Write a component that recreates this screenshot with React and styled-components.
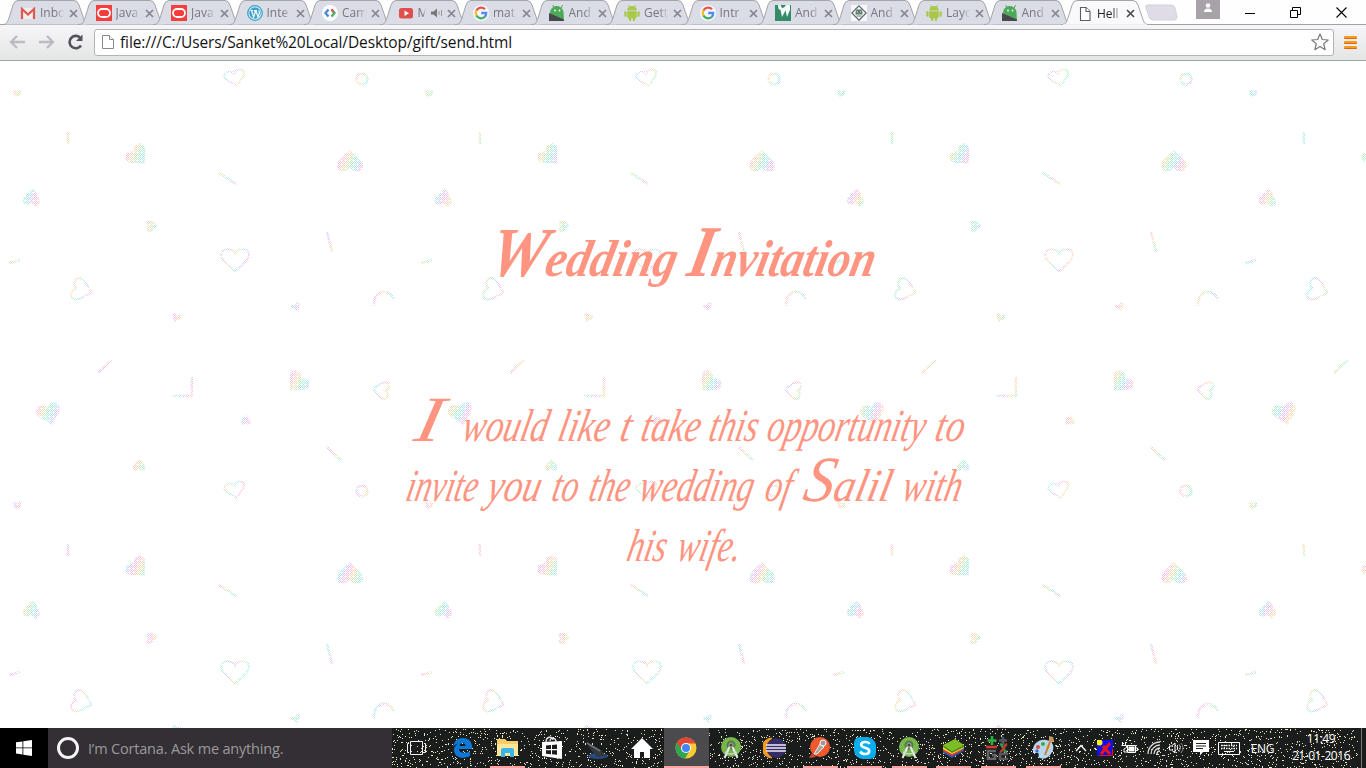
import React, { useLayoutEffect, useRef, useState } from 'react';
import styled, { createGlobalStyle } from 'styled-components';

const GlobalStyle = createGlobalStyle`
  * { box-sizing: border-box; }
  html, body { margin: 0; padding: 0; overflow: hidden; background: #fff; }
  svg { display: block; flex: none; }
`;

const Screen = styled.div`
  width: 1366px;
  height: 768px;
  display: flex;
  flex-direction: column;
  overflow: hidden;
  font-family: 'Open Sans', 'Noto Sans', sans-serif;
`;

/* ---------- browser frame ---------- */

const TabStrip = styled.div`
  height: 25px;
  flex: none;
  display: flex;
  background: #fefefe;
  border-bottom: 1px solid #a2a2a4;
  padding-left: 6px;
`;

const TabBox = styled.div`
  position: relative;
  width: ${(p) => (p.$active ? 80.4 : 75.5)}px;
  height: ${(p) => (p.$active ? 25 : 24)}px;
  flex: none;
  display: flex;
  align-items: center;
  padding: 2px 0 0 14px;
  z-index: ${(p) => (p.$active ? 2 : 1)};
`;

const TabShape = styled.svg`
  position: absolute;
  left: ${(p) => (p.$active ? 2 : 0)}px;
  top: 0;
  overflow: visible;
`;

const Favicon = styled.div`
  position: relative;
  width: 16px;
  height: 16px;
  flex: none;
  opacity: ${(p) => (p.$active ? 1 : 0.9)};
`;

const TabTitle = styled.div`
  position: relative;
  margin-left: 4px;
  width: ${(p) => (p.$short ? 8 : 24)}px;
  white-space: nowrap;
  font-size: 12px;
  line-height: 18px;
  color: ${(p) => (p.$active ? '#222' : '#77777c')};
  mask-image: linear-gradient(90deg, #000 65%, transparent);
`;

const CloseMark = styled.svg`
  position: relative;
  margin-left: 5px;
`;

const NewTab = styled.svg`
  margin: 4px 0 0 1px;
`;

const WindowButtons = styled.div`
  margin-left: auto;
  margin-right: 2px;
  display: flex;
  height: 24px;
`;

const Person = styled.div`
  width: 24px;
  height: 19px;
  margin-right: 8px;
  background: #a6a2a8;
  display: flex;
  justify-content: center;
`;

const WinButton = styled.div`
  width: 45.5px;
  height: 25px;
  display: flex;
  align-items: center;
  justify-content: center;
`;

const Toolbar = styled.div`
  height: 36px;
  flex: none;
  display: flex;
  align-items: center;
  padding: 0 8px 1px 9px;
  background: linear-gradient(#f6f5f7, #e4e6e6);
  border-bottom: 1px solid #9aa59e;
`;

const NavIcons = styled.div`
  display: flex;
  gap: 12px;
  width: 85px;
`;

const Omnibox = styled.div`
  flex: none;
  width: 1240px;
  height: 27px;
  display: flex;
  align-items: center;
  padding: 0 4px 0 7px;
  background: #fff;
  border: 1px solid #b2b4b4;
  border-radius: 3px;
`;

const Url = styled.div`
  flex: 1;
  margin-left: 4px;
  font-size: 15.5px;
  letter-spacing: -0.12px;
  line-height: 22px;
  color: #141414;
`;

const MenuBars = styled.div`
  margin-left: 10px;
  width: 13px;
  display: flex;
  flex-direction: column;
  gap: 2px;
`;

const MenuBar = styled.div`
  height: 3px;
  background: #f59a1c;
  border-bottom: 1px solid #e2680c;
  border-radius: 1px;
`;

/* ---------- invitation page ---------- */

const Page = styled.main`
  position: relative;
  height: 667px;
  flex: none;
  overflow: hidden;
  background: #fff;
  color: #ff9480;
  font-family: 'Liberation Serif', serif;
  font-style: italic;
`;

const Confetti = styled.svg`
  position: absolute;
  inset: 0;
`;

const Heading = styled.h1`
  position: relative;
  margin: 0;
  padding: 160px 0 0 488px;
  display: flex;
  gap: 11px;
  height: 241px;
  font-size: 52px;
  font-weight: 700;
  line-height: 76px;
`;

const Message = styled.div`
  position: relative;
  padding-top: 94px;
  font-size: 46px;
  line-height: 60px;
`;

const Line = styled.div`
  display: flex;
  height: 60px;
  padding-left: ${(p) => p.$start}px;
`;

const WordBox = styled.span`
  flex: none;
  width: ${(p) => p.$w}px;
  margin-right: ${(p) => p.$gap || 0}px;
  white-space: nowrap;
`;

const WordInk = styled.span`
  display: inline-block;
  transform-origin: 0 62%;
`;

const Initial = styled.span`
  font-size: ${(p) => p.$size}em;
  line-height: 0;
`;

/* Squeezes a word to the width that the layout gives it and slants it like handwriting. */
function Word({ w, gap, children }) {
  const ref = useRef(null);
  const [scale, setScale] = useState(1);
  useLayoutEffect(() => {
    setScale(w / ref.current.offsetWidth);
  }, [w]);
  return (
    <WordBox $w={w} $gap={gap}>
      <WordInk ref={ref} style={{ transform: `skewX(-12deg) scaleX(${scale})` }}>{children}</WordInk>
    </WordBox>
  );
}

/* ---------- taskbar ---------- */

const Taskbar = styled.footer`
  position: relative;
  height: 40px;
  flex: none;
  display: flex;
  background: #1b1d1c;
  color: #fff;
`;

const Specks = styled.svg`
  position: absolute;
  left: 392px;
  top: 0;
`;

const Start = styled.div`
  width: 48px;
  flex: none;
  background: #000;
  display: flex;
  align-items: center;
  justify-content: center;
`;

const Search = styled.div`
  width: 344px;
  flex: none;
  display: flex;
  align-items: center;
  padding-left: 9px;
  gap: 9px;
  background: #332f34;
  color: #9b9a9c;
  font-size: 14.5px;
  letter-spacing: -0.18px;
`;

const Ring = styled.div`
  width: 22px;
  height: 22px;
  border: 3px solid #f4f4f4;
  border-radius: 50%;
`;

const Apps = styled.div`
  position: relative;
  display: flex;
  flex: none;
  width: 674px;
`;

const AppCell = styled.div`
  width: ${(p) => (p.$wide ? 49 : 44.6)}px;
  flex: none;
  display: flex;
  align-items: center;
  justify-content: center;
  background: ${(p) => (p.$active ? '#4b4b4d' : 'transparent')};
  box-shadow: ${(p) => (p.$active ? 'inset 0 -2px #ffa3a3' : 'none')};
  ${(p) =>
    p.$open &&
    'background: linear-gradient(#ffa3a3, #ffa3a3) center bottom / 35px 2px no-repeat;'}
`;

const Tray = styled.div`
  position: relative;
  flex: 1;
  display: flex;
  align-items: center;
  padding-left: 3px;
`;

const TrayItem = styled.div`
  width: ${(p) => p.$w}px;
  flex: none;
  display: flex;
  justify-content: center;
  font-size: 12px;
  letter-spacing: -0.3px;
`;

const Clock = styled.div`
  width: 76px;
  flex: none;
  margin-top: -2px;
  text-align: center;
  font-size: 12px;
  line-height: 17px;
  letter-spacing: -0.45px;
`;

const Edge = styled.div`
  width: 1px;
  height: 40px;
  margin-left: auto;
  margin-right: 4px;
  background: #77777a;
`;

/* ---------- favicons ---------- */

const icons = {
  gmail: (
    <svg width="16" height="16"><rect x="1" y="3" width="14" height="11" fill="#f3eef0" /><path d="M2 14V4l6 5.500L14 4v10" fill="none" stroke="#dd4b3e" strokeWidth="2.200" /></svg>
  ),
  oracle: (
    <svg width="16" height="16"><rect width="16" height="16" fill="#fa2d2a" /><rect x="2" y="4" width="12" height="8" rx="4" fill="none" stroke="#fff" strokeWidth="1.800" /></svg>
  ),
  wordpress: (
    <svg width="16" height="16"><circle cx="8" cy="8" r="7.300" fill="#e9f4fa" stroke="#2b9cc8" strokeWidth="1.300" /><circle cx="8" cy="8" r="5.800" fill="#2b9cc8" /><path d="M3.500 5.500h2.500M7 5.500h3M4.500 5.500l2.200 6.500L8.200 7.500 7.700 5.500M8.800 5.500l2.200 6.500 1.500-4.500-.8-2" fill="none" stroke="#fff" strokeWidth="1.200" /></svg>
  ),
  brackets: (
    <svg width="16" height="16"><circle cx="8" cy="8" r="8" fill="#fff" /><path d="M6.500 4.500L3.500 8l3 3.500" fill="none" stroke="#3b7fd9" strokeWidth="2.300" /><path d="M9.500 4.500L12.500 8l-3 3.500" fill="none" stroke="#3aa757" strokeWidth="2.300" /><path d="M9.500 4.500l2 2.300" fill="none" stroke="#e8453c" strokeWidth="2.300" /></svg>
  ),
  youtube: (
    <svg width="16" height="16"><rect x="1" y="3" width="14" height="10.500" rx="2.500" fill="#e2403c" /><path d="M6.500 5.500v5.500L11 8.200z" fill="#fff" /></svg>
  ),
  google: (
    <svg width="16" height="16"><circle cx="8" cy="8" r="8" fill="#fafafd" /><g fill="none" strokeWidth="2.300"><path d="M12 4.200A5.300 5.300 0 0 0 3.400 5.500" stroke="#ea4335" /><path d="M3.400 5.500a5.300 5.300 0 0 0 0 5" stroke="#fbbc05" /><path d="M3.400 10.500a5.300 5.300 0 0 0 8.400 1.300" stroke="#34a853" /><path d="M11.600 12A5 5 0 0 0 13.200 8H8.200" stroke="#4285f4" /></g></svg>
  ),
  hive: (
    <svg width="16" height="16"><path d="M1 9A6.800 7 0 0 1 14.500 7l.5 9z" fill="#3fa549" /><path d="M3.500 0l2 3M13.500 0l-1.500 3.500" stroke="#3fa549" /><circle cx="6" cy="5.500" r=".9" fill="#fff" /><circle cx="10.500" cy="5.500" r=".9" fill="#fff" /><path d="M0 8L15 14.500V16H0z" fill="#36393b" /></svg>
  ),
  android: (
    <svg width="16" height="16" fill="#a4c63a"><path d="M3.200 5.500a4.800 4.500 0 0 1 9.600 0z" /><path d="M4.500 0l1.500 2.500M11.500 0L10 2.500" stroke="#a4c63a" /><rect x="3.200" y="6.200" width="9.600" height="7" rx="1" /><rect x=".3" y="6.200" width="2.200" height="5.500" rx="1" /><rect x="13.500" y="6.200" width="2.200" height="5.500" rx="1" /><rect x="5" y="12" width="2.200" height="4" rx="1" /><rect x="8.800" y="12" width="2.200" height="4" rx="1" /></svg>
  ),
  green: (
    <svg width="16" height="16"><rect width="16" height="16" fill="#23835a" /><path d="M3 0l.5 4 2 1L7 12l3.500-6.500L12 12l3-7V0h-4l-2 2.500L7 3 5.500 0z" fill="#f7fcf9" /></svg>
  ),
  diamond: (
    <svg width="16" height="16"><rect width="16" height="16" fill="#fafafa" /><path d="M8 .8L15.200 8 8 15.200 .8 8z" fill="none" stroke="#54585a" strokeWidth="1.200" /><path d="M4.500 7.500a3.500 3 0 0 1 7 0v2h-7z" fill="#4f7464" /><path d="M5.500 11h5M5 3.500l1.500 1.500M11 3.500L9.500 5" stroke="#4f7464" /><path d="M6 7h1M9 7h1" stroke="#fff" /></svg>
  ),
  page: (
    <svg width="16" height="16" fill="#fff" stroke="#5c5c60" strokeWidth="1.100"><path d="M3.500 1.500h5.500l4 4v9H3.500z" /><path d="M9 1.500v4h4" /></svg>
  ),
};

const tabs = [
  ['gmail', 'Inbo'], ['oracle', 'Java'], ['oracle', 'Java'], ['wordpress', 'Inte'],
  ['brackets', 'Cam'], ['youtube', 'M'], ['google', 'mat'], ['hive', 'And'],
  ['android', 'Gett'], ['google', 'Intr'], ['green', 'And'], ['diamond', 'And'],
  ['android', 'Layo'], ['hive', 'And'], ['page', 'Hell'],
];

function Tab({ icon, title, active }) {
  const short = icon === 'youtube';
  return (
    <TabBox $active={active}>
      <TabShape $active={active} width="88" height="25">
        <path
          d="M-4 24.500C1 24.500 1 23 3 18L7 5Q8.500 .5 12 .5H68Q71.500 .5 73 5L77.500 18C79 23 80 24.500 84 24.500"
          fill={active ? '#f9f8fa' : '#dadce6'}
          stroke="#a5a5a9"
        />
        {active && <path d="M-2 25h84" stroke="#f7f6f8" strokeWidth="1.500" />}
      </TabShape>
      <Favicon $active={active}>{icons[icon]}</Favicon>
      <TabTitle $active={active} $short={short}>{title}</TabTitle>
      {short && (
        <CloseMark width="11" height="12"><path d="M0 4.500h2.500L6 1.500v9L2.500 7.500H0z" fill="#77777b" /><path d="M8 4v4M10.500 3v6" stroke="#99999d" /></CloseMark>
      )}
      <CloseMark width="9" height="9" viewBox="0 0 9 9">
        <path d="M1 1l7 7M8 1L1 8" stroke={active ? '#4c4c50' : '#85858a'} strokeWidth="1.700" />
      </CloseMark>
    </TabBox>
  );
}

/* ---------- confetti pattern ---------- */

const HEART = 'M0 .5C-.25 .2-.5 0-.5-.22-.5-.52-.12-.56 0-.28 .12-.56 .5-.52 .5-.22 .5 0 .25 .2 0 .5Z';

const hearts = [
  [235, 17, 20, 16, -12, 0], [17, 33, 9, 8, 0, 1], [138, 95, 23, 20, -42, 1],
  [350, 100, 26, 22, 180, 1], [32, 136, 17, 18, 190, 1], [152, 165, 12, 11, -90, 1],
  [235, 199, 28, 23, 0, 0], [82, 229, 22, 20, -75, 0], [176, 257, 9, 9, 20, 1],
  [296, 246, 9, 8, -20, 1], [297, 322, 23, 20, 43, 1], [381, 329, 17, 16, 100, 0],
  [49, 353, 24, 22, -14, 1], [246, 359, 10, 10, 180, 1], [139, 404, 13, 12, 180, 1],
];

const strokes = [
  'M68 71v12', 'M219 112l17 11', 'M327 171l5 20', 'M9 202l11-3', 'M374 245c-1-10 6-15 11-14 5 0 7 3 9 7',
  'M98 312l14-13', 'M192 316v19h-20', 'M327 386l15 14',
];

function Background() {
  return (
    <Confetti width="1366" height="667">
      <defs>
        <linearGradient id="tint" gradientUnits="userSpaceOnUse" x1="0" y1="0" x2="20" y2="9" spreadMethod="repeat">
          <stop offset="0" stopColor="#f9b8f2" />
          <stop offset=".3" stopColor="#fbdcae" />
          <stop offset=".5" stopColor="#b6f0c4" />
          <stop offset=".75" stopColor="#a8e8f4" />
          <stop offset="1" stopColor="#f9b8f2" />
        </linearGradient>
        <pattern id="gaps" width="4" height="4" patternUnits="userSpaceOnUse">
          <path
            d="M1 0h1v1H1zM3 0h1v1H3zM0 1h1v1H0zM2 1h1v1H2zM1 2h1v1H1zM3 2h1v1H3zM0 3h1v1H0zM2 3h1v1H2zM1 3h1v1H1z"
            fill="#fff"
            shapeRendering="crispEdges"
          />
        </pattern>
        <mask id="shapes">
          {[0, 412, 824, 1236].map((dx) =>
            [0, 412].map((dy) => (
              <g key={`${dx}-${dy}`} transform={`translate(${dx} ${dy})`}>
                {hearts.map(([x, y, w, h, r, solid], i) => (
                  <path
                    key={i}
                    d={HEART}
                    transform={`translate(${x} ${y}) rotate(${r}) scale(${w} ${h})`}
                    fill={solid ? '#fff' : 'none'}
                    stroke={solid ? 'none' : '#fff'}
                    strokeWidth={2 / w}
                  />
                ))}
                <circle cx="362" cy="18" r="5.500" fill="none" stroke="#fff" strokeWidth="2.500" />
                {strokes.map((d) => (
                  <path key={d} d={d} fill="none" stroke="#fff" strokeWidth="2.500" />
                ))}
              </g>
            )),
          )}
        </mask>
      </defs>
      <rect width="1366" height="667" fill="url(#tint)" mask="url(#shapes)" />
      <rect width="1366" height="667" fill="url(#gaps)" />
    </Confetti>
  );
}

/* ---------- taskbar drawings ---------- */

const studio = (
  <svg width="22" height="24"><circle cx="11" cy="11" r="10" fill="#78b74c" /><circle cx="11" cy="9" r="4.500" fill="#5c7a48" /><path d="M9.500 11L4.500 22M12.500 11l5 11" stroke="#e7e9ea" strokeWidth="2" /><path d="M5 16q6 4 12 0" fill="none" stroke="#d2d6d8" strokeWidth="1.500" /><circle cx="11" cy="9" r="2" fill="#3f4a3c" stroke="#a9b5a4" /></svg>
);

const apps = [
  { wide: true, art: <svg width="22" height="20" fill="none" stroke="#f2f2f2"><path d="M4.500 3.500h12v13h-12zM3 5.500H1.500v9H3M18 5.500h1.500v9H18" /></svg> },
  { art: <svg width="22" height="22"><path d="M1 10C2 4 6 1 11 1c6 0 9 4 9 9v2H7c0 4 6 5 11 2.500v4.500C10 23 2 20 2 13c0-3 2-5.500 5-6.500C4 7 2 8 1 10zM7.500 9h6c0-4-5.500-4-6 0z" fill="#0c78d8" /></svg> },
  { open: true, art: <svg width="24" height="22"><path d="M1 2h8l2 2h11v15H1z" fill="#f5cf63" /><path d="M1 7h21v12H1z" fill="#fce69a" /><path d="M5 20v-7q0-2 2-2h9q2 0 2 2v7h-4v-4H9v4z" fill="#38b6ea" /></svg> },
  { art: <svg width="22" height="24"><path d="M5 6C5 0 12 0 12 4M9 5c0-4 6-4 6 1" fill="none" stroke="#eee" strokeWidth="1.300" /><path d="M1 6l20-1v18L1 20z" fill="#fff" /><path d="M5 9.500l5-.4v4H5zM11 9l5-.4v4.500h-5zM5 14.200h5v4l-5-.4zM11 14.200h5v4.600l-5-.5z" fill="#1c1c1c" /></svg> },
  { art: <svg width="24" height="24"><ellipse cx="13" cy="20" rx="10" ry="3" fill="#254a84" /><path d="M1 6l15 8 5 6-9 1-6-7z" fill="#34383c" /><path d="M2 7l13 8" stroke="#6c7378" strokeWidth="1.500" /></svg> },
  { art: <svg width="22" height="22"><path d="M11 1L0 12h3v9h6v-6h4v6h6v-9h3z" fill="#fff" /></svg> },
  { active: true, art: <svg width="22" height="22"><circle cx="11" cy="11" r="10.500" fill="#f8cb35" /><path d="M2 5.500A10.500 10.500 0 0 0 10 21.500L15 13z" fill="#2fa454" /><path d="M2 5.500A10.500 10.500 0 0 1 20.500 6.500H11Q7 7 6 12z" fill="#e4473a" /><circle cx="11" cy="11" r="5" fill="#fff" /><circle cx="11" cy="11" r="4" fill="#4285f4" /></svg> },
  { art: studio },
  { art: <svg width="24" height="22"><path d="M9 1A10 10 0 0 0 9 21 13 13 0 0 1 9 1z" fill="#f39a23" stroke="#f39a23" /><circle cx="13" cy="11" r="9.800" fill="#352c65" /><path d="M3 8h20M3 11h20M3 14h20" stroke="#eeeaf6" strokeWidth="1.400" /></svg> },
  { open: true, art: <svg width="24" height="24"><circle cx="12" cy="11" r="10" fill="#f0582d" /><path d="M1 22l3-5 4 4z" fill="#d44b25" /><path d="M6 18l6-10 4 3-7 7z" fill="#a9a49f" stroke="#eee" /><circle cx="15" cy="7" r="3" fill="#999" stroke="#fff" /></svg> },
  { open: true, art: <svg width="24" height="24"><path d="M7 1h7a9 9 0 0 1 9 9v7a6 6 0 0 1-6 6h-7a9 9 0 0 1-9-9V7a6 6 0 0 1 6-6z" fill="#09adec" /><path d="M16.500 8C15 5 8 5.500 8.200 9c.2 3.500 8 2 8 6 0 4-7 4-9 .5" fill="none" stroke="#fff" strokeWidth="2.600" /></svg> },
  { open: true, art: studio },
  { open: true, art: <svg width="24" height="20"><path d="M1 11l8-3 13 2v3l-12 7L1 15z" fill="#2456a5" /><path d="M1 9l20 1v2l-11 6L1 13z" fill="#e63b2f" /><path d="M1 7l21 1v2l-12 6L1 11z" fill="#f8e337" /><path d="M1 7l12-6 9 6-12 6z" fill="#7dbd26" /><path d="M1 7l9 6 12-6v2l-12 6L1 9z" fill="#458c19" /></svg> },
  { open: true, art: <svg width="24" height="24" fill="none" strokeWidth="2.600"><path d="M6 0v9M1.500 4.500h9" stroke="#2fae45" /><path d="M0 11h11" stroke="#d33930" /><path d="M10 15H2v8h7v-4H6" stroke="#62666a" /><path d="M17 1v8M13 4.500h8" stroke="#54595b" /><path d="M14 8c5 2 1 6 7 8" stroke="#2a9c4e" /><path d="M21 8c-4 2-2 6-7 8" stroke="#c4372f" /><path d="M22 18h-8v5h8" stroke="#55595c" /></svg> },
  { open: true, art: <svg width="24" height="24"><path d="M2 16C1 8 8 3 15 4c7 1 9 7 6 12-3 6-8 8-12 6-3-1 0-4-2-5-2-.5-4 1-5-1z" fill="#b8d6ec" /><circle cx="7" cy="11" r="2" fill="#e3473f" /><circle cx="12" cy="8" r="2" fill="#43aa4a" /><circle cx="6" cy="15" r="1.700" fill="#356fd0" /><circle cx="17" cy="11" r="2" fill="#eec33c" /><path d="M20 3l-6 16" stroke="#c97a35" strokeWidth="2" /><path d="M18 0l4 1 1 4-3 2-2-1z" fill="#c59566" /></svg> },
];

const speckPath = (() => {
  let seed = 7;
  const next = () => {
    seed = (seed * 16807) % 2147483647;
    return seed / 2147483647;
  };
  let d = '';
  for (let i = 0; i < 2400; i += 1) {
    d += `M${Math.floor(next() * 966)} ${1 + Math.floor(next() * 39)}h1v1h-1z`;
  }
  return d;
})();

export default function App() {
  return (
    <Screen>
      <GlobalStyle />
      <TabStrip>
        {tabs.map(([icon, title], i) => (
          <Tab key={i} icon={icon} title={title} active={i === tabs.length - 1} />
        ))}
        <NewTab width="34" height="17">
          <path d="M3 1h24q3 0 4 3l2 9q0 3-3 3H9q-3 0-4-3L2 4Q1 1 3 1z" fill="#dfdce8" stroke="#d3d3d9" />
        </NewTab>
        <WindowButtons>
          <Person><svg width="12" height="14" fill="#fff"><circle cx="6" cy="5.500" r="2.200" /><path d="M2 12q0-3.500 4-3.500t4 3.500z" /></svg></Person>
          <WinButton><svg width="10" height="10"><path d="M0 5.500h10" stroke="#000" /></svg></WinButton>
          <WinButton><svg width="11" height="11" fill="none" stroke="#000"><path d="M.5 3.500h7v7h-7zM2.500 3V.5h8v7H8" /></svg></WinButton>
          <WinButton><svg width="11" height="11"><path d="M.5 .5l10 10M10.500 .5l-10 10" stroke="#000" strokeWidth="1.100" /></svg></WinButton>
        </WindowButtons>
      </TabStrip>
      <Toolbar>
        <NavIcons>
          <svg width="17" height="16" fill="none" stroke="#bcbcbf" strokeWidth="2.300"><path d="M16 8H3M8 2L2 8l6 6" /></svg>
          <svg width="17" height="16" fill="none" stroke="#bcbcbf" strokeWidth="2.300"><path d="M1 8h13M9 2l6 6-6 6" /></svg>
          <svg width="17" height="16"><path d="M14 11.500A6.200 6.200 0 1 1 13 3.500" fill="none" stroke="#55525a" strokeWidth="2.600" /><path d="M15.500 .5v6.500H9z" fill="#55525a" /></svg>
        </NavIcons>
        <Omnibox>
          <svg width="14" height="16" fill="#fff" stroke="#88888c"><path d="M.5 1.500h7l4 4v9H.5z" /><path d="M7.500 1.500v4h4" /></svg>
          <Url>file:///C:/Users/Sanket%20Local/Desktop/gift/send.html</Url>
          <svg width="18" height="18"><path d="M9 1l2.300 5.500 5.900.5-4.500 3.900 1.400 5.800L9 13.500l-5.100 3.200 1.400-5.800L.8 7l5.900-.5z" fill="#fff" stroke="#77777b" strokeWidth="1.200" strokeLinejoin="round" /></svg>
        </Omnibox>
        <MenuBars><MenuBar /><MenuBar /><MenuBar /></MenuBars>
      </Toolbar>

      <Page>
        <Background />
        <Heading>
          <Word w={188}><Initial $size={1.35}>W</Initial>edding</Word>
          <Word w={187}><Initial $size={1.4}>I</Initial>nvitation</Word>
        </Heading>
        <Message>
          <Line $start={414}>
            <Word w={26} gap={22}><Initial $size={1.4}>I</Initial></Word>
            <Word w={85} gap={11}>would</Word>
            <Word w={51} gap={11}>like</Word>
            <Word w={11} gap={10}>t</Word>
            <Word w={59} gap={9}>take</Word>
            <Word w={48} gap={10}>this</Word>
            <Word w={158} gap={10}>opportunity</Word>
            <Word w={29}>to</Word>
          </Line>
          <Line $start={406}>
            <Word w={71} gap={10}>invite</Word>
            <Word w={53} gap={12}>you</Word>
            <Word w={26} gap={11}>to</Word>
            <Word w={40} gap={10}>the</Word>
            <Word w={114} gap={12}>wedding</Word>
            <Word w={26} gap={12}>of</Word>
            <Word w={88} gap={11}><Initial $size={1.4}>S</Initial>alil</Word>
            <Word w={59}>with</Word>
          </Line>
          <Line $start={627}>
            <Word w={39} gap={11}>his</Word>
            <Word w={63}>wife.</Word>
          </Line>
        </Message>
      </Page>

      <Taskbar>
        <Specks width="974" height="40"><path d={speckPath} fill="#e9e7c8" shapeRendering="crispEdges" /></Specks>
        <Start><svg width="16" height="16" fill="#fff"><path d="M0 2.300l6.500-.9v6.100H0zM7.300 1.300L16 0v7.500H7.300zM0 8.300h6.500v6.100L0 13.500zM7.300 8.300H16V16l-8.700-1.300z" /></svg></Start>
        <Search><Ring />I’m Cortana. Ask me anything.</Search>
        <Apps>
          {apps.map((a, i) => (
            <AppCell key={i} $wide={a.wide} $open={a.open} $active={a.active}>{a.art}</AppCell>
          ))}
        </Apps>
        <Tray>
          <TrayItem $w={24}><svg width="12" height="8"><path d="M1 7l5-5.500L11 7" fill="none" stroke="#fff" strokeWidth="1.300" /></svg></TrayItem>
          <TrayItem $w={24}><svg width="16" height="16"><rect width="16" height="16" fill="#1010e8" /><path d="M4 14l9-11M6 6q4 5 7 8" stroke="#e8141c" strokeWidth="3" /><path d="M2 15.500h13.500V9" fill="none" stroke="#e8141c" /><circle cx="2.500" cy="2.500" r="3" fill="#fbf417" /></svg></TrayItem>
          <TrayItem $w={24}><svg width="17" height="12" fill="none" stroke="#fff"><path d="M6.500 3.500h8v7h-8zM15 6h1.500v2.500H15M1.500 0v3M4.500 0v3M.5 3.500h5v2L3 7v3h3" /><rect x="8" y="5" width="5" height="4" fill="#fff" /></svg></TrayItem>
          <TrayItem $w={25}><svg width="14" height="14" fill="none" stroke="#ddd" strokeWidth="1.300"><path d="M1 13A12 12 0 0 1 13 1M4 13a9 9 0 0 1 9-9M7 13a6 6 0 0 1 6-6M10 13a3 3 0 0 1 3-3" /></svg></TrayItem>
          <TrayItem $w={20}><svg width="15" height="12" fill="none" stroke="#fff"><path d="M.5 4v4h2L6 11V1L2.500 4z" /><path d="M8 4q1.500 2 0 4" /><path d="M10 2q3 4 0 8M12 1q4 5 0 10" stroke="#888" /></svg></TrayItem>
          <TrayItem $w={30}><svg width="16" height="16"><path d="M0 0h16v12H10l-3 3.500V12H0z" fill="#fff" /><path d="M3 3.500h10M3 6h10M3 8.500h7" stroke="#222" /></svg></TrayItem>
          <TrayItem $w={26}><svg width="22" height="13" fill="none" stroke="#fff"><path d="M.5 .5h21v12H.5z" /><path d="M3 3.500h16M3 6.500h16" strokeDasharray="1.500 1" strokeWidth="1.500" /><path d="M6 9.500h10" /></svg></TrayItem>
          <TrayItem $w={41}>ENG</TrayItem>
          <Clock>11:49<br />21-01-2016</Clock>
          <Edge />
        </Tray>
      </Taskbar>
    </Screen>
  );
}
